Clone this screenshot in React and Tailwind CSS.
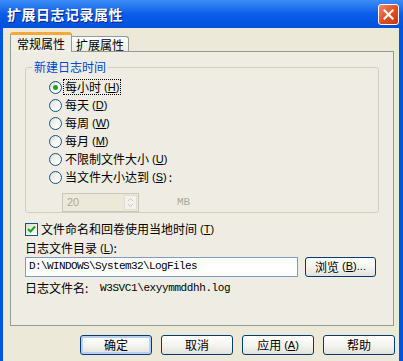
import React from "react";

const F = { fontFamily: '"Noto Sans CJK SC", "Liberation Sans", sans-serif' };

function K({ c }) {
  return (
    <span className="ml-[3px] font-['Liberation_Sans'] text-[11px]">
      (<span className="underline">{c}</span>)
    </span>
  );
}

function Radio({ checked, label, k, focus, suffix }) {
  return (
    <div className="flex h-[18px] items-center">
      <div className="flex h-[13px] w-[13px] items-center justify-center rounded-full border border-[#1C5180] bg-gradient-to-br from-[#DCDCD5] via-[#F5F5F2] to-white">
        {checked && <div className="h-[5px] w-[5px] rounded-full bg-[#21A121]" />}
      </div>
      <div className={"ml-[2px] flex items-center px-[1px] leading-[14px] " + (focus ? "outline outline-1 outline-dotted outline-black" : "")}>
        <span>{label}</span>
        <K c={k} />
        {suffix}
      </div>
    </div>
  );
}

function Btn({ children, def, w = "w-[72px]" }) {
  return (
    <div className={"flex h-[20px] items-center justify-center rounded-[3px] border border-[#003C74] bg-gradient-to-b from-white via-[#F4F4F0] to-[#E3E2DA] text-[12px] " + w + (def ? " shadow-[inset_0_0_0_2px_#B7CFF5]" : "")}>
      {children}
    </div>
  );
}

export default function App() {
  return (
    <div style={F} className="flex h-[361px] w-[403px] flex-col overflow-hidden bg-[#0054E3] text-[12px] text-black">
      {/* title bar */}
      <div className="flex h-[28px] shrink-0 items-center bg-gradient-to-b from-[#3D8DF7] via-[#0A5DE8] to-[#0050DC] pl-[7px] pr-[4px]">
        <span className="text-[14px] font-bold tracking-[0.5px] text-white [text-shadow:1px_1px_0_#0A1E8C]">扩展日志记录属性</span>
        <div className="ml-auto flex h-[21px] w-[21px] items-center justify-center rounded-[3px] border border-white bg-gradient-to-br from-[#F08A6A] via-[#E0501F] to-[#C63A10]">
          <svg width="11" height="11" viewBox="0 0 11 11">
            <path d="M1.5 1.5 L9.5 9.5 M9.5 1.5 L1.5 9.5" stroke="white" strokeWidth="2.2" strokeLinecap="square" />
          </svg>
        </div>
      </div>
      {/* client */}
      <div className="mx-[3px] mr-[4px] flex flex-1 flex-col bg-[#ECE9D8] pl-[7px] pr-[4px]">
        {/* tabs */}
        <div className="mt-[5px] flex h-[18px] items-end">
          <div className="relative z-10 -mb-[1px] flex h-[20px] w-[62px] items-center justify-center rounded-t-[3px] border-x border-[#919B9C] border-t-[3px] border-t-[#F4A93A] bg-[#F2F0E6] pt-[1px]">
            常规属性
          </div>
          <div className="flex h-[15px] w-[57px] items-center justify-center rounded-tr-[3px] border-r border-t border-[#919B9C] bg-gradient-to-b from-white to-[#ECEBE6] pt-[2px]">
            扩展属性
          </div>
        </div>
        {/* panel */}
        <div className="flex h-[275px] w-[384px] flex-col border border-[#919B9C] bg-[#EFEDE3]">
          {/* group */}
          <div className="relative ml-[14px] mt-[15px] h-[146px] w-[354px] rounded-[3px] border border-[#D0D0BF]">
            <span className="absolute -top-[9px] left-[6px] bg-[#EFEDE3] px-[2px] leading-[16px] text-[#0046D5]">新建日志时间</span>
            <div className="ml-[23px] mt-[10px] flex flex-col">
              <Radio checked focus label="每小时" k="H" />
              <Radio label="每天" k="D" />
              <Radio label="每周" k="W" />
              <Radio label="每月" k="M" />
              <Radio label="不限制文件大小" k="U" />
              <Radio label="当文件大小达到" k="S" suffix={<span className="ml-[2px]">:</span>} />
            </div>
            <div className="ml-[36px] mt-[7px] flex items-center">
              <div className="flex h-[19px] w-[77px] items-center border border-[#C9C7BA] bg-[#ECE9D8]">
                <span className="ml-[4px] flex-1 font-['Liberation_Sans'] text-[11px] text-[#ACA899]">20</span>
                <div className="mr-[1px] flex h-[15px] w-[13px] flex-col border border-[#E0DED4] bg-[#F3F2EC]">
                  <svg width="11" height="13" viewBox="0 0 11 13">
                    <path d="M3 5 L5.5 2.5 L8 5" stroke="#C9C7BA" fill="none" />
                    <path d="M3 8 L5.5 10.5 L8 8" stroke="#C9C7BA" fill="none" />
                  </svg>
                </div>
              </div>
              <span className="ml-[38px] font-['Liberation_Mono'] text-[11px] text-[#ACA899]">MB</span>
            </div>
          </div>
          {/* checkbox */}
          <div className="ml-[14px] mt-[8px] flex items-center">
            <div className="flex h-[13px] w-[13px] items-center justify-center border border-[#1C5180] bg-gradient-to-br from-[#DCDCD5] to-white">
              <svg width="9" height="9" viewBox="0 0 9 9">
                <path d="M1 4 L3.5 6.5 L8 1.5" stroke="#21A121" strokeWidth="2" fill="none" />
              </svg>
            </div>
            <span className="ml-[3px] leading-[14px]">文件命名和回卷使用当地时间</span>
            <K c="T" />
          </div>
          <div className="ml-[14px] mt-[3px] flex items-center leading-[14px]">
            <span>日志文件目录</span>
            <K c="L" />
            <span>:</span>
          </div>
          <div className="ml-[14px] mt-[2px] flex items-center">
            <div className="flex h-[20px] w-[273px] items-center border border-[#7F9DB9] bg-white pl-[3px] font-['Liberation_Mono'] text-[11px] tracking-[-0.6px]">
              D:\WINDOWS\System32\LogFiles
            </div>
            <div className="ml-[7px]">
              <Btn w="w-[71px]">
                <span>浏览</span>
                <K c="B" />
                <span className="font-['Liberation_Sans'] text-[11px]">...</span>
              </Btn>
            </div>
          </div>
          <div className="ml-[14px] mt-[4px] flex items-center leading-[14px]">
            <span className="w-[75px]">日志文件名:</span>
            <span className="font-['Liberation_Mono'] text-[11px] tracking-[-0.4px]">W3SVC1\exyymmddhh.log</span>
          </div>
        </div>
        {/* buttons */}
        <div className="mt-[9px] flex justify-end gap-[9px] pr-[0px]">
          <Btn def>确定</Btn>
          <Btn>取消</Btn>
          <Btn>
            <span>应用</span>
            <K c="A" />
          </Btn>
          <Btn>帮助</Btn>
        </div>
      </div>
    </div>
  );
}
